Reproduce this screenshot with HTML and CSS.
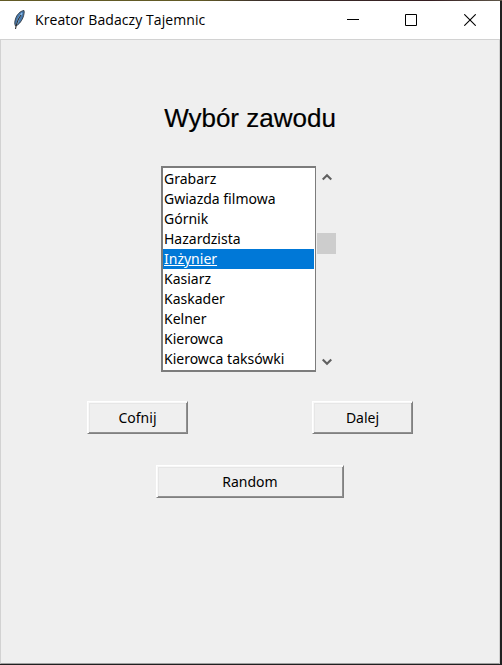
FILE: index.html
```html
<!DOCTYPE html>
<html lang="pl">
<head>
<meta charset="utf-8">
<title>Kreator Badaczy Tajemnic</title>
<link rel="stylesheet" href="styles.css">
</head>
<body>
<div class="window">
  <header class="titlebar">
    <svg class="feather" width="14" height="20" viewBox="0 0 14 20">
      <path d="M12 .5C8 1 4.500 5 3.500 9C2.500 12 2.500 14 3.500 16C6.500 15 9 12 10.800 8C12 5 12.500 2 12 .5Z" fill="#4779ad" stroke="#303840" stroke-width=".9"/>
      <path d="M10 3C7.500 6 6 9 5 14" fill="none" stroke="#8dbbe8" stroke-width="1.500"/>
      <path d="M9 5C6 9 4.500 13 3.500 19" fill="none" stroke="#303030" stroke-width="1.100"/>
    </svg>
    <span class="caption">Kreator Badaczy Tajemnic</span>
    <div class="controls">
      <svg width="12" height="12" viewBox="0 0 12 12"><path d="M0 5.500H12" stroke="#000"/></svg>
      <svg width="12" height="12" viewBox="0 0 12 12"><path d="M.5 .5H11.500V11.500H.5Z" fill="none" stroke="#000"/></svg>
      <svg width="12" height="12" viewBox="0 0 12 12"><path d="M.3 .3L11.700 11.700M11.700 .3L.3 11.700" stroke="#000" stroke-width="1.100"/></svg>
    </div>
  </header>
  <main class="content">
    <h1 class="heading">Wybór zawodu</h1>
    <div class="picker">
      <ul class="listbox">
        <li>Grabarz</li>
        <li>Gwiazda filmowa</li>
        <li>Górnik</li>
        <li>Hazardzista</li>
        <li class="selected">Inżynier</li>
        <li>Kasiarz</li>
        <li>Kaskader</li>
        <li>Kelner</li>
        <li>Kierowca</li>
        <li>Kierowca taksówki</li>
      </ul>
      <div class="scrollbar">
        <svg width="10" height="8" viewBox="0 0 10 8"><path d="M.7 6.500L5 2.200L9.300 6.500" fill="none" stroke="#606060" stroke-width="2.200"/></svg>
        <div class="thumb"></div>
        <svg class="down" width="10" height="8" viewBox="0 0 10 8"><path d="M.7 1.500L5 5.800L9.300 1.500" fill="none" stroke="#606060" stroke-width="2.200"/></svg>
      </div>
    </div>
    <div class="nav">
      <button class="btn">Cofnij</button>
      <button class="btn">Dalej</button>
    </div>
    <button class="btn wide">Random</button>
  </main>
</div>
</body>
</html>
```
FILE: styles.css
```css
* { box-sizing: border-box; }
body {
  margin: 0;
  height: 665px;
  overflow: hidden;
  background: #202020;
  padding: 1px 2px 1px 0;
  background-image: linear-gradient(90deg, #625a25 0 200px, #3c302b 260px, #351d20 430px, #60584a 502px);
  background-size: 100% 1px;
  background-repeat: no-repeat;
  font-family: "Noto Sans", sans-serif;
  color: #000;
}
.window {
  height: 663px;
  display: flex;
  flex-direction: column;
}
.titlebar {
  height: 38px;
  flex: none;
  display: flex;
  align-items: center;
  background: #fff;
  padding-left: 12px;
}
.feather { margin-top: -1px; }
.caption {
  margin-left: 9px;
  font-family: "Open Sans", sans-serif;
  font-size: 14px;
  letter-spacing: 0.08px;
  line-height: 20px;
  white-space: nowrap;
}
.controls {
  margin-left: auto;
  display: flex;
  gap: 46px;
  padding-right: 25px;
}
.controls svg { display: block; }
.controls svg:last-child { margin-right: -1px; margin-left: 1px; }
.content {
  flex: 1;
  background: #efefef;
  border: 1px solid #d2d2d2;
  border-bottom-color: #a0a0a0;
  display: flex;
  flex-direction: column;
  align-items: center;
}
.heading {
  margin: 63px 0 0;
  font: 26px/30px "Liberation Sans", Arial, sans-serif;
  -webkit-text-stroke: 0.2px #000;
}
.picker {
  display: flex;
  width: 178px;
  margin-top: 33px;
}
.listbox {
  width: 155px;
  height: 206px;
  margin: 0;
  padding: 1px 1px 1px 0;
  list-style: none;
  background: #fff;
  border: 2px solid #7c7c7c;
  border-right-width: 1px;
  font-size: 14px;
  line-height: 20px;
  white-space: nowrap;
}
.listbox li { height: 20px; padding-left: 1px; }
.selected {
  background: #0078d7;
  color: #fff;
  text-decoration: underline;
}
.scrollbar {
  display: flex;
  flex-direction: column;
  align-items: center;
  width: 19px;
  margin-left: 1px;
  padding: 7px 0 6px;
}
.scrollbar svg { display: block; flex: none; }
.thumb {
  width: 19px;
  height: 21px;
  margin-top: 52px;
  background: #cdcdcd;
}
.down { margin-top: auto; }
.nav {
  display: flex;
  justify-content: space-between;
  width: 326px;
  margin-top: 29px;
}
.btn {
  width: 101px;
  height: 33px;
  padding: 0;
  border: 1px solid;
  border-color: #fff #808080 #808080 #fff;
  background: #efefef;
  box-shadow: inset 1px 1px #f8f8f8, inset -1px -1px #909090, inset 2px 2px #e6e6e6;
  font: 14px/20px "Noto Sans", sans-serif;
  color: #000;
}
.wide { width: 188px; margin-top: 31px; }
```
